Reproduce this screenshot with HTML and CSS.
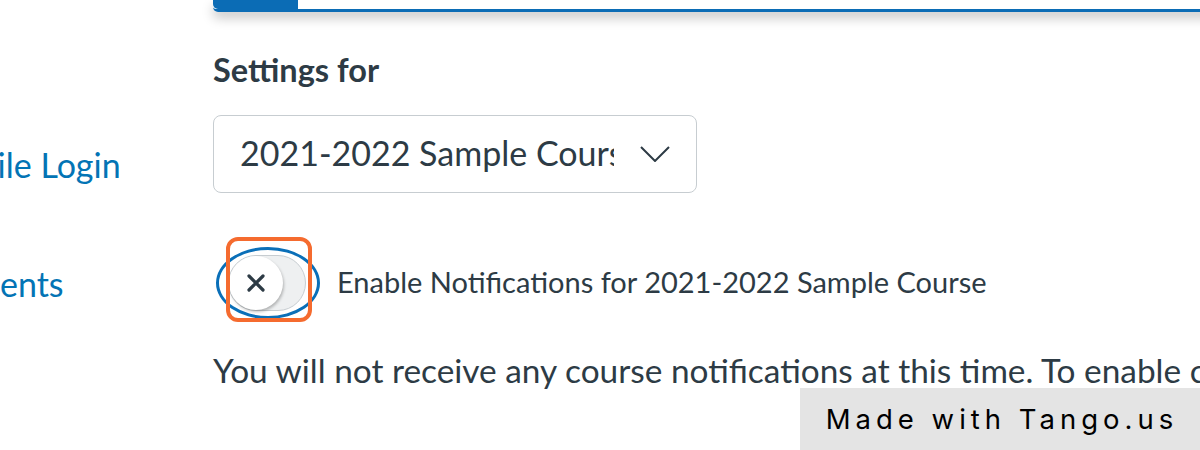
FILE: index.html
```html
<!DOCTYPE html>
<html lang="en">
<head>
<meta charset="utf-8">
<title>Notification Settings</title>
<link rel="stylesheet" href="styles.css">
</head>
<body>
<div class="page">
  <nav class="nav">
    <a class="nav-link" href="#">QR for Mobile Login</a>
    <a class="nav-link" href="#">Global Announcements</a>
  </nav>
  <main class="main">
    <div class="topcard"><div class="topcard-tab"></div></div>
    <h2 class="settings-title">Settings for</h2>
    <div class="select">
      <span class="select-text">2021-2022 Sample Course</span>
      <svg class="chevron" width="30" height="16" viewBox="0 0 30 16"><polyline points="1,1 15,15 29,1" fill="none" stroke="#2d3b45" stroke-width="2"/></svg>
    </div>
    <div class="toggle-row">
      <div class="toggle-ring">
        <div class="toggle-track">
          <div class="toggle-knob">
            <svg width="20" height="20" viewBox="0 0 20 20"><path d="M3 3 L17 17 M17 3 L3 17" stroke="#2d3b45" stroke-width="3.2" stroke-linecap="round"/></svg>
          </div>
        </div>
        <div class="highlight"></div>
      </div>
      <span class="toggle-label">Enable Notifications for 2021-2022 Sample Course</span>
    </div>
    <p class="info">You will not receive any course notifications at this time. To enable course notifications, use the toggle above.</p>
  </main>
</div>
<div class="tango">Made with Tango.us</div>
</body>
</html>
```

FILE: styles.css
```css
html, body {
  margin: 0;
  padding: 0;
  background: #ffffff;
  overflow: hidden;
  width: 1200px;
  height: 450px;
}
body {
  font-family: Lato, "Liberation Sans", sans-serif;
  color: #2d3b45;
}
.page {
  display: flex;
  align-items: flex-start;
}
.nav {
  flex: 0 0 322px;
  margin-left: -180px;
  margin-right: 71px;
  display: flex;
  flex-direction: column;
  padding-top: 140px;
  gap: 19px;
}
.nav-link {
  font-size: 34px;
  line-height: 50px;
  color: #0374b5;
  text-decoration: none;
}
.main {
  flex: 1;
  min-width: 0;
}
.topcard {
  width: calc(100% + 30px);
  height: 9px;
  border-bottom: 3px solid #0b6cb5;
  border-bottom-left-radius: 5px;
  box-shadow: 0 6px 12px rgba(0, 0, 0, 0.22);
  display: flex;
}
.topcard-tab {
  width: 85px;
  height: 100%;
  background: #0b6cb5;
  border-bottom-left-radius: 5px;
}
.settings-title {
  margin: 39px 0 0;
  font-size: 32.5px;
  font-weight: 700;
  line-height: 38px;
}
.select {
  margin-top: 26px;
  width: 484px;
  height: 78px;
  box-sizing: border-box;
  border: 1px solid #c7cdd1;
  border-radius: 8px;
  display: flex;
  align-items: center;
  padding: 0 26px 3px 26px;
  gap: 26px;
}
.select-text {
  flex: 1;
  min-width: 0;
  overflow: hidden;
  white-space: nowrap;
  font-size: 34px;
  line-height: 41px;
}
.chevron {
  flex: 0 0 auto;
  margin-top: 2px;
}
.toggle-row {
  margin-top: 54px;
  margin-left: 3px;
  display: flex;
  align-items: center;
  gap: 17px;
}
.toggle-ring {
  position: relative;
  width: 104px;
  height: 72px;
  box-sizing: border-box;
  border: 3px solid #0a6fb8;
  border-radius: 52px / 36px;
  display: flex;
  align-items: center;
  justify-content: center;
}
.toggle-track {
  width: 78px;
  height: 56px;
  box-sizing: border-box;
  border-radius: 28px;
  background: #eef0f1;
  border: 1px solid #c7cdd1;
  display: flex;
  align-items: center;
  margin-left: -2px;
}
.toggle-knob {
  width: 54px;
  height: 54px;
  border-radius: 50%;
  background: #ffffff;
  box-shadow: 1px 2px 3px rgba(0, 0, 0, 0.25);
  display: flex;
  align-items: center;
  justify-content: center;
}
.highlight {
  position: absolute;
  left: 7px;
  top: -13px;
  width: 86px;
  height: 85px;
  box-sizing: border-box;
  border: 4px solid #f56b2f;
  border-radius: 12px;
}
.toggle-label {
  font-size: 29px;
  line-height: 36px;
  margin-top: -2px;
}
.info {
  margin: 31px 0 0;
  font-size: 33.4px;
  line-height: 41px;
  white-space: nowrap;
}
.tango {
  position: absolute;
  left: 800px;
  top: 388px;
  width: 400px;
  height: 62px;
  background: #e4e4e4;
  color: #000000;
  font-family: Inter, "Open Sans", sans-serif;
  font-size: 27.5px;
  letter-spacing: 5px;
  display: flex;
  align-items: center;
  justify-content: center;
  padding-left: 4px;
  box-sizing: border-box;
}
```
